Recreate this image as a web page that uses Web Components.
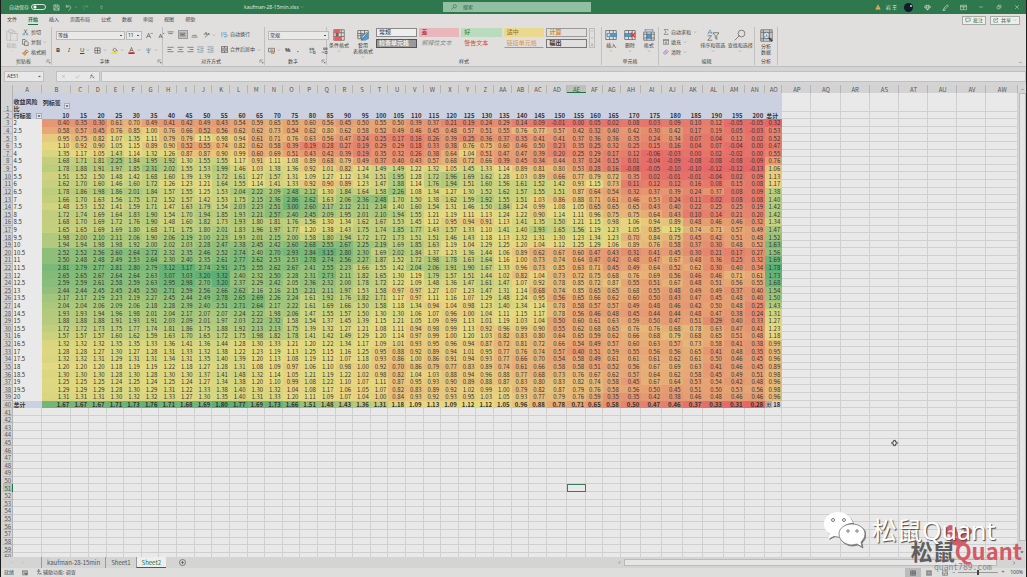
<!DOCTYPE html>
<html lang="zh-CN">
<head>
<meta charset="utf-8">
<title>kaufman-28-15min.xlsx</title>
<style>
  html, body { height: 100%; }
  body {
    margin: 0;
    overflow: hidden;
    background: #1d1f1e;
    color: #444;
    font: 5px/7px "Noto Sans", "Noto Sans CJK SC", sans-serif;
  }
</style>
</head>
<body>
<excel-app></excel-app>

<script>
const ICONS = {
  save: '<path d="M2 2h10l2 2v10H2zM5 2v4h6V2M4 14V9h8v5"/>',
  undo: '<path d="M3 2v5h5M3 7c3-5 11-3 10 2-.5 3-3 4-5 6"/>',
  redo: '<path d="M13 2v5H8M13 7C10 2 2 4 3 9c.500 3 3 4 5 6"/>',
  more: '<path d="M4 4h8M5 8l3 4 3-4"/>',
  chevron: '<path d="M4 6l4 4 4-4"/>',
  up: '<path d="M4 10l4-4 4 4"/>',
  left: '<path d="M10 4L6 8l4 4"/>',
  right: '<path d="M6 4l4 4-4 4"/>',
  search: '<circle cx="10" cy="6" r="4.500"/><path d="M7 9l-6 6"/>',
  warn: '<path d="M8 2l6 12H2z" fill="#efb464" stroke="#efb464"/><path d="M8 6v4M8 12v1" stroke="#6b4a10"/>',
  gem: '<path d="M4 3h8l3 4-7 7-7-7zM1 7h14M6 3L5 7l3 7 3-7-1-4"/>',
  pen: '<path d="M13 2L6 7l-3 6 5-2 6-6zM3 13l-1 2h6"/>',
  display: '<path d="M1 3h14v10H1zM1 6h14M8 12V8M6 9l2-2 2 2"/>',
  min: '<path d="M3 8h10"/>',
  restore: '<path d="M3 6h7v7H3zM6 6V3h7v7h-3"/>',
  close: '<path d="M3 3l10 10M13 3L3 13"/>',
  comment: '<path d="M2 3h12v8H8l-3 3v-3H2z"/>',
  share: '<path d="M7 5H2v9h10v-4M6 10c0-4 3-5 7-5M10 2l3 3-3 3"/>',
  paste: '<path d="M4 3H1v12h5M9 3h3v3M4 1h5v4H4zM6 6h9v10H6z" stroke="#b0b0b0"/>',
  cut: '<path d="M5 1l5 9M11 1L6 10"/><g stroke="#3b84b5"><circle cx="4" cy="12" r="2"/><circle cx="12" cy="12" r="2"/></g>',
  copy: '<path d="M6 12H1V1h6l3 3M6 5h5l3 3v7H6z"/>',
  brush: '<path d="M10 2l4 4-3 3-4-4z"/><path d="M7 5l4 4-4 6-6-5z" fill="#e3a24b" stroke="#bd7d2d"/>',
  borders: '<path d="M2 2h12v12H2zM2 8h12M8 2v12"/>',
  fill: '<path d="M4 7l4-5 5 5-5 4zM13 7l2 3"/><path d="M1 14h14" stroke="#eee21a" stroke-width="4"/>',
  fontcolor: '<path d="M4 11L8 1l4 10M5 8h6"/><path d="M1 14h14" stroke="#d3232a" stroke-width="4"/>',
  phonetic: '<path d="M2 5h12M8 2v3M4 8h8M8 8v7M5 12h6" stroke="#6084a0"/>',
  grow: '<path d="M1 14L6 3l5 11M3 10h6M11 4l2-2 2 2"/>',
  shrink: '<path d="M2 14L6 5l4 9M4 11h4M11 2l2 2 2-2"/>',
  atop: '<path d="M1 2h14M3 6h10"/>',
  amid: '<path d="M1 5h14M3 8h10M1 11h14"/>',
  abot: '<path d="M3 10h10M1 14h14"/>',
  aleft: '<path d="M1 3h14M1 8h9M1 13h14"/>',
  acenter: '<path d="M1 3h14M4 8h8M1 13h14"/>',
  aright: '<path d="M1 3h14M6 8h9M1 13h14"/>',
  orient: '<path d="M2 9l5-6 3 6M4 7h5M4 15L14 6M11 6h3v3"/>',
  outdent: '<path d="M1 2h14M8 6h7M8 10h7M1 14h14M6 8H1M3 6L1 8l2 2" stroke="#567a91"/>',
  indent: '<path d="M1 2h14M8 6h7M8 10h7M1 14h14M1 8h5M4 6l2 2-2 2" stroke="#567a91"/>',
  wrap: '<path d="M2 2v12M5 4h8M5 8h7c4 0 3 5 0 5H8M10 11l-2 2 2 2" stroke="#3b84b5"/>',
  merge: '<path d="M1 1h14v14H1zM1 5h14M1 11h14M8 1v4M8 11v4"/><path d="M3 8h10M5 6L3 8l2 2M11 6l2 2-2 2" stroke="#3b84b5"/>',
  money: '<path d="M1 3h14v8H1zM5 7h6"/><path d="M8 9h6v6H8z" fill="#e3a24b" stroke="#bd7d2d"/>',
  decup: '<path d="M2 3h3v4H2zM8 3h3v4H8zM10 10h4v5h-4z"/><path d="M8 12H2M4 10l-2 2 2 2" stroke="#3b84b5"/>',
  decdown: '<path d="M6 2h3v4H6zM11 2h3v4h-3zM9 10h5v5H9z"/><path d="M1 12h5M4 10l2 2-2 2" stroke="#3b84b5"/>',
  cond: '<path d="M1 1h14v14H1zM1 5h14M1 10h14M6 1v14M11 1v14"/><path d="M2 1h7v4H2zM2 10h9v5H2z" fill="#dd615f" stroke="#dd615f"/><path d="M4 6h3v3H4z" fill="#4e90bb"/>',
  tablefmt: '<path d="M1 2h14v11H1zM1 6h14M1 9h14M5 2v11M10 2v11"/><path d="M6 6h9v7l-4 2H6z" fill="#4e9bcb" stroke="#4e9bcb"/><path d="M15 4l-6 7-3 4 1-5 6-6" fill="#e5f0f5"/>',
  insert: '<path d="M1 2h14v12H1zM6 2v12M11 2v12"/><path d="M3 6h13v4H3z" fill="#4e9bcb" stroke="#327aa8"/><path d="M6 5L2 8l4 3" stroke="#327aa8" fill="#e0dfdd"/>',
  del: '<path d="M1 2h14v12H1zM6 2v12M11 2v12"/><path d="M1 6h9v4H1z" fill="#4e9bcb" stroke="#327aa8"/><path d="M9 5l6 6M15 5l-6 6" stroke="#d93837" stroke-width="2"/>',
  format: '<path d="M1 4h14v11H1zM1 7h14M1 12h14M5 4v11M11 4v11"/><path d="M5 7h6v5H5z" fill="#4e9bcb" stroke="#327aa8"/><path d="M3 1h10M3 0v3M13 0v3" stroke="#327aa8"/>',
  sum: '<path d="M13 4V1H3l5 7-5 7h10v-3"/>',
  filldown: '<path d="M1 1h14v13H1zM1 4h14"/><path d="M8 6v6M5 9l3 3 3-3" stroke="#3b84b5" stroke-width="2"/>',
  clear: '<path d="M2 9l7-7 5 5-7 7H4l-3-3z" fill="#ddbde4" stroke="#9b54a6"/><path d="M5 6l5 5" stroke="#9b54a6"/>',
  sort: '<path d="M1 7l3-6 3 6M2 5h4" stroke="#3b84b5"/><path d="M1 9h5l-5 6h6M8 5h8l-3 4v5l-2-2V9z"/>',
  analyze: '<path d="M1 1h14v14H1zM1 4h14M1 12h14M4 1v14M12 1v14"/><circle cx="8" cy="8" r="4" fill="#e0e9ed"/><path d="M6 10V8M8 10V6M10 10V7" stroke="#3b84b5"/><path d="M11 11l4 4" stroke-width="2"/>',
  launcher: '<path d="M3 12V3h9M7 7l6 6M13 9v4H9"/>',
  fx: '<path d="M2 14c4 1 3-11 7-12M4 7h6M9 9l5 5M14 9l-5 5"/>',
  check: '<path d="M2 8l4 5 8-10"/>',
  plus: '<circle cx="8" cy="8" r="7"/><path d="M8 4v8M4 8h8"/>',
  drop: '<path d="M5 7h6l-3 3z" fill="currentColor"/>',
  macro: '<path d="M1 2h14v11H1zM1 5h14M4 8h4M4 10h4"/><circle cx="11" cy="10" r="2" fill="currentColor"/>',
  access: '<circle cx="7" cy="3" r="2"/><path d="M2 6h10M7 6v4l-3 5M7 10l2 4M10 10l5 5M15 10l-5 5"/>',
  normal: '<path d="M1 2h14v12H1zM1 6h14M1 10h14M6 2v12M11 2v12"/>',
  page: '<path d="M1 2h14v12H1zM4 4h8v8H4zM6 7h4M6 9h4"/>',
  breaks: '<path d="M1 2h14v12H1zM1 8h5v6M10 2v7h5"/>',
  tag: '<path d="M2 2h12v12H2z" fill="#eef1f5"/><path d="M5 5h7v7H5zM5 8h7M8 5v7"/>'
};

class UiIcon extends HTMLElement {
  connectedCallback() {
    const size = this.getAttribute("size") || 7;
    this.attachShadow({ mode: "open" }).innerHTML = `
      <style>
        :host { display: inline-flex; flex: none; }
        svg { display: block; fill: none; stroke: currentColor; stroke-width: ${size > 10 ? 0.8 : 1.3}; }
      </style>
      <svg width="${size}" height="${size}" viewBox="0 0 16 16" aria-hidden="true">${ICONS[this.getAttribute("name")]}</svg>
    `;
  }
}
customElements.define("ui-icon", UiIcon);

// icon, optional text and optional arrow; "tall" stacks them
class ToolButton extends HTMLElement {
  connectedCallback() {
    const icon = this.getAttribute("icon");
    const size = this.getAttribute("size") || 7;
    this.attachShadow({ mode: "open" }).innerHTML = `
      <style>
        :host { display: inline-flex; flex: none; }
        button {
          display: flex; align-items: center; gap: 2px;
          min-width: 8px; padding: 0; border: 0;
          background: none; color: inherit; font: inherit; white-space: nowrap;
        }
        :host([tall]) button { flex-direction: column; gap: 1px; line-height: 6px; }
        :host([on]) button { background: #c2c2c0; outline: 1px solid #9b9b9b; }
        :host([faded]) button { color: #aaa; }
        :host([wide]) button { justify-content: center; width: 18px; height: 13px; }
      </style>
      <button type="button" aria-label="${this.getAttribute("label") || icon || ""}">
        ${icon ? `<ui-icon name="${icon}" size="${size}"></ui-icon>` : ""}
        <slot></slot>
        ${this.hasAttribute("menu") ? '<ui-icon name="chevron" size="4"></ui-icon>' : ""}
      </button>
    `;
  }
}
customElements.define("tool-button", ToolButton);

class TitleBar extends HTMLElement {
  connectedCallback() {
    this.attachShadow({ mode: "open" }).innerHTML = `
      <style>
        :host {
          display: grid; grid-template-columns: 243fr 199fr 148fr 435fr;
          align-items: center; height: 14px; background: #2f774d; color: #d9e7de;
        }
        .left, .right { display: flex; align-items: center; }
        .left { gap: 4px; padding-left: 8px; }
        label { display: flex; align-items: center; gap: 2px; }
        input[type=checkbox] {
          appearance: none; width: 15px; height: 6px; margin: 0 3px 0 0;
          border: 1px solid #d9e7de; border-radius: 4px;
          background: radial-gradient(circle at 3px 2px, #fff 1px, transparent 2px);
        }
        .search {
          display: flex; align-items: center; gap: 6px; height: 10px; padding-left: 8px;
          background: #91bfa2; color: #285b3c;
        }
        input[type=search] {
          flex: 1; min-width: 0; padding: 0; border: 0; background: none; color: inherit; font: inherit;
        }
        .right { justify-content: flex-end; }
        .user { margin: 0 5px; white-space: pre; }
        .avatar { width: 9px; height: 9px; margin: 0 5px 0 2px; border-radius: 50%; background: radial-gradient(circle at 7px 3px, #98a6b5 0 1px, #101c2a 1px); }
      </style>
      <div class="left">
        <label>自动保存 <input type="checkbox"></label>
        <tool-button icon="save"></tool-button>
        <tool-button icon="undo" menu></tool-button>
        <tool-button icon="redo" menu style="opacity: .35"></tool-button>
        <tool-button icon="more" size="5"></tool-button>
      </div>
      <div>kaufman-28-15min.xlsx <ui-icon name="chevron" size="4"></ui-icon></div>
      <div class="search"><ui-icon name="search" size="6"></ui-icon><input type="search" value="搜索" aria-label="搜索"></div>
      <div class="right">
        <ui-icon name="warn" size="6"></ui-icon>
        <span class="user">岩 王</span>
        <span class="avatar"></span>
        <tool-button wide icon="gem"></tool-button>
        <tool-button wide icon="pen"></tool-button>
        <tool-button wide icon="display"></tool-button>
        <tool-button wide icon="min" size="6"></tool-button>
        <tool-button wide icon="restore" size="6"></tool-button>
        <tool-button wide icon="close" size="6"></tool-button>
      </div>
    `;
  }
}
customElements.define("title-bar", TitleBar);

class RibbonTabs extends HTMLElement {
  connectedCallback() {
    const tabs = ["文件", "开始", "插入", "页面布局", "公式", "数据", "审阅", "视图", "帮助"];
    this.attachShadow({ mode: "open" }).innerHTML = `
      <style>
        :host { display: flex; align-items: center; height: 12px; padding: 0 6px; background: #e0dfdd; }
        nav { display: flex; flex: 1; gap: 11px; }
        a { color: #444; text-decoration: none; line-height: 9px; border-bottom: 1px solid transparent; }
        a.on { color: #1f6e43; font-weight: bold; border-color: #1f6e43; }
        .act { display: flex; gap: 4px; }
        .act tool-button { padding: 0 2px; border: 1px solid #a9a9a9; background: #eeeeed; color: #1f6e43; line-height: 7px; }
      </style>
      <nav>${tabs.map((t, i) => `<a href="#"${i === 1 ? ' class="on"' : ""}>${t}</a>`).join("")}</nav>
      <div class="act">
        <tool-button icon="comment" size="6">批注</tool-button>
        <tool-button icon="share" size="6" menu>共享</tool-button>
      </div>
    `;
  }
}
customElements.define("ribbon-tabs", RibbonTabs);

class RibbonGroup extends HTMLElement {
  connectedCallback() {
    this.attachShadow({ mode: "open" }).innerHTML = `
      <style>
        :host { display: flex; flex-direction: column; box-sizing: border-box; flex: none; border-right: 1px solid #c0c0be; }
        .body { flex: 1; display: flex; min-height: 0; }
        footer { display: flex; justify-content: center; align-items: center; height: 8px; }
        footer span { flex: 1; text-align: center; }
      </style>
      <div class="body"><slot></slot></div>
      <footer><span>${this.getAttribute("label")}</span>${this.hasAttribute("launcher") ? '<ui-icon name="launcher" size="5"></ui-icon>' : ""}</footer>
    `;
  }
}
customElements.define("ribbon-group", RibbonGroup);

class StyleChip extends HTMLElement {
  connectedCallback() {
    this.attachShadow({ mode: "open" }).innerHTML = `
      <style>
        :host { display: block; }
        button {
          box-sizing: border-box; width: 100%; height: 9px; padding: 0 2px;
          border: 1px solid var(--edge, transparent); border-bottom-color: var(--line, var(--edge, transparent));
          background: var(--fill, transparent); color: var(--ink, #333);
          font: inherit; font-size: 6px; line-height: 7px; text-align: left;
        }
      </style>
      <button type="button"><slot></slot></button>
    `;
  }
}
customElements.define("style-chip", StyleChip);

class RibbonBar extends HTMLElement {
  connectedCallback() {
    this.attachShadow({ mode: "open" }).innerHTML = `
      <style>
        :host { display: flex; height: 38px; padding: 1px 0; background: #e0dfdd; border-bottom: 1px solid #bebebe; }
        .rows { display: flex; flex: 1; flex-direction: column; justify-content: space-around; }
        .row { display: flex; align-items: center; gap: 4px; }
        .big { display: flex; flex: 1; justify-content: space-around; align-items: flex-start; padding-top: 2px; text-align: center; }
        .two { padding: 0 4px; }
        select {
          appearance: none; box-sizing: border-box; height: 9px; padding: 0 1px; border: 1px solid #b9b9b9; border-radius: 0;
          background: #e9e9e8 linear-gradient(#555, #555) no-repeat right 2px center / 2px 1px;
          color: #333; font: inherit;
        }
        .gallery {
          display: grid; grid-template-columns: repeat(5, 1fr) 6px; gap: 2px;
          width: 219px; margin: 1px 6px auto 1px;
        }
        .scroll { grid-area: 1 / 6 / 3 / 7; display: flex; flex-direction: column; justify-content: space-between; align-items: center; border: 1px solid #bbb; }
        .end { display: flex; flex: 1; align-items: flex-end; justify-content: flex-end; padding: 0 3px; }
        b, i, u { font-size: 6px; }
      </style>
      <ribbon-group label="剪贴板" launcher style="width: 51px">
        <div class="big" style="flex: none; width: 21px"><tool-button tall faded menu icon="paste" size="12">粘贴</tool-button></div>
        <div class="rows">
          <tool-button icon="cut">剪切</tool-button>
          <tool-button icon="copy" menu>复制</tool-button>
          <tool-button icon="brush">格式刷</tool-button>
        </div>
      </ribbon-group>
      <ribbon-group label="字体" launcher style="width: 111px">
        <div class="rows two">
          <div class="row">
            <select aria-label="字体" style="width: 69px; margin-right: -3px"><option>等线</option></select>
            <select aria-label="字号" style="width: 16px"><option>11</option></select>
            <tool-button icon="grow"></tool-button><tool-button icon="shrink"></tool-button>
          </div>
          <div class="row">
            <tool-button label="加粗"><b>B</b></tool-button>
            <tool-button label="倾斜"><i>I</i></tool-button>
            <tool-button label="下划线" menu><u>U</u></tool-button>
            <tool-button icon="borders" menu></tool-button>
            <tool-button icon="fill" menu></tool-button>
            <tool-button icon="fontcolor" menu></tool-button>
            <tool-button icon="phonetic" menu></tool-button>
          </div>
        </div>
      </ribbon-group>
      <ribbon-group label="对齐方式" launcher style="width: 102px">
        <div class="rows two" style="flex: none; width: 50px">
          <div class="row">
            <tool-button icon="atop"></tool-button><tool-button icon="amid" on></tool-button><tool-button icon="abot"></tool-button>
            <tool-button icon="orient" menu></tool-button>
          </div>
          <div class="row" style="gap: 2px">
            <tool-button icon="aleft"></tool-button><tool-button icon="acenter"></tool-button><tool-button icon="aright"></tool-button>
            <tool-button icon="outdent"></tool-button><tool-button icon="indent"></tool-button>
          </div>
        </div>
        <div class="rows">
          <tool-button icon="wrap">自动换行</tool-button>
          <tool-button icon="merge" menu>合并后居中</tool-button>
        </div>
      </ribbon-group>
      <ribbon-group label="数字" launcher style="width: 62px">
        <div class="rows" style="padding: 0 3px">
          <select aria-label="数字格式"><option>常规</option></select>
          <div class="row">
            <tool-button icon="money" menu></tool-button>
            <tool-button label="百分比"><b>%</b></tool-button>
            <tool-button label="千位分隔"><b>,</b></tool-button>
            <tool-button icon="decup"></tool-button><tool-button icon="decdown"></tool-button>
          </div>
        </div>
      </ribbon-group>
      <ribbon-group label="样式" style="width: 275px">
        <div class="big">
          <tool-button tall menu icon="cond" size="12">条件格式</tool-button>
          <tool-button tall menu icon="tablefmt" size="12">套用<br>表格格式</tool-button>
        </div>
        <div class="gallery">
          <style-chip style="--edge: #8a8a8a; --fill: #eee">常规</style-chip>
          <style-chip style="--fill: #e9b7bb; --ink: #a52634">差</style-chip>
          <style-chip style="--fill: #b8dcbc; --ink: #237a35">好</style-chip>
          <style-chip style="--fill: #ebd98f; --ink: #97701b">适中</style-chip>
          <style-chip style="--edge: #9b9b9b; --ink: #db8228; font-weight: bold">计算</style-chip>
          <style-chip style="--edge: #555; --fill: #999; --ink: #eee; font-weight: bold">检查单元格</style-chip>
          <style-chip style="--ink: #888; font-style: italic">解释性文本</style-chip>
          <style-chip style="--ink: #dc4442">警告文本</style-chip>
          <style-chip style="--line: #d98a3a; --ink: #dd943f">链接单元格</style-chip>
          <style-chip style="--edge: #777; font-weight: bold">输出</style-chip>
          <div class="scroll"><ui-icon name="up" size="4"></ui-icon><ui-icon name="chevron" size="4"></ui-icon><ui-icon name="more" size="4"></ui-icon></div>
        </div>
      </ribbon-group>
      <ribbon-group label="单元格" style="width: 57px">
        <div class="big">
          <tool-button tall menu icon="insert" size="12">插入</tool-button>
          <tool-button tall menu icon="del" size="12">删除</tool-button>
          <tool-button tall menu icon="format" size="12">格式</tool-button>
        </div>
      </ribbon-group>
      <ribbon-group label="编辑" style="width: 96px">
        <div class="rows" style="padding-left: 4px">
          <tool-button icon="sum" size="6" menu>自动求和</tool-button>
          <tool-button icon="filldown" size="6" menu>填充</tool-button>
          <tool-button icon="clear" size="6" menu>清除</tool-button>
        </div>
        <div class="big" style="flex: none; width: 55px">
          <tool-button tall menu icon="sort" size="12">排序和筛选</tool-button>
          <tool-button tall menu icon="search" size="12">查找和选择</tool-button>
        </div>
      </ribbon-group>
      <ribbon-group label="分析" style="width: 23px">
        <div class="big"><tool-button tall icon="analyze" size="13">分析<br>数据</tool-button></div>
      </ribbon-group>
      <div class="end"><ui-icon name="up" size="5"></ui-icon></div>
    `;
  }
}
customElements.define("ribbon-bar", RibbonBar);

class FormulaBar extends HTMLElement {
  connectedCallback() {
    this.attachShadow({ mode: "open" }).innerHTML = `
      <style>
        :host { display: flex; align-items: center; gap: 12px; height: 18px; padding-left: 3px; background: #d4d4d4; }
        input, .tools, .name { box-sizing: border-box; height: 11px; border: 1px solid #c0c0c0; background: #e8e8e8; color: #444; font: inherit; }
        .name { display: flex; align-items: center; width: 40px; padding-right: 1px; }
        .name input { flex: 1; min-width: 0; border: 0; padding: 0 2px; height: 9px; }
        .wrap { display: flex; flex: 1; gap: 1px; }
        .tools { display: flex; align-items: center; justify-content: space-around; width: 44px; }
        .formula { flex: 1; }
      </style>
      <div class="name"><input value="AE51" aria-label="名称框"><ui-icon name="drop" size="5"></ui-icon></div>
      <div class="wrap">
        <div class="tools"><ui-icon name="close" size="5" style="color: #999"></ui-icon><ui-icon name="check" size="5" style="color: #999"></ui-icon><ui-icon name="fx" size="6"></ui-icon></div>
        <input class="formula" aria-label="编辑栏">
      </div>
    `;
  }
}
customElements.define("formula-bar", FormulaBar);

// one line per sheet row, 3 to 40: label, 10 to 200, row total
const DATA = `
2 0.40 0.35 0.30 0.61 0.70 0.49 0.41 0.42 0.49 0.43 0.54 0.59 0.65 0.55 0.60 0.56 0.45 0.50 0.55 0.50 0.39 0.37 0.21 0.19 0.24 0.29 0.14 0.09 -0.01 0.00 0.05 0.02 0.08 0.03 0.09 0.10 0.12 -0.05 -0.05 0.32
2.5 0.58 0.57 0.45 0.76 0.85 1.00 0.76 0.66 0.52 0.56 0.62 0.62 0.73 0.54 0.62 0.80 0.62 0.58 0.52 0.49 0.46 0.45 0.48 0.57 0.51 0.55 0.76 0.77 0.57 0.42 0.32 0.40 0.42 0.30 0.42 0.17 0.19 0.05 -0.03 0.53
3 0.95 0.75 0.82 1.07 1.35 1.11 0.79 0.79 1.15 0.98 0.94 0.61 0.71 0.76 0.63 0.56 0.47 0.24 0.25 0.17 0.16 0.26 0.39 0.25 0.36 0.37 0.35 0.41 0.41 0.37 0.36 0.36 0.35 0.24 0.34 0.07 0.04 0.12 0.02 0.52
3.5 1.10 0.92 0.90 1.05 1.15 0.89 0.90 0.52 0.55 0.74 0.82 0.62 0.58 0.39 0.19 0.28 0.27 0.19 0.29 0.29 0.18 0.33 0.38 0.76 0.75 0.60 0.46 0.50 0.23 0.35 0.25 0.32 0.25 0.15 0.16 0.04 0.07 -0.04 0.00 0.47
4 1.35 1.17 1.05 1.43 1.14 1.32 1.26 0.87 0.87 0.90 0.99 0.60 0.69 0.51 0.43 0.42 0.39 0.19 0.35 0.32 0.26 0.38 0.64 1.04 0.51 0.47 0.47 0.39 0.20 0.25 0.29 0.17 0.12 -0.06 -0.03 0.00 0.02 -0.02 0.00 0.55
4.5 1.68 1.71 1.81 2.25 1.84 1.95 1.92 1.30 1.55 1.55 1.17 0.91 1.11 1.08 0.89 0.68 0.79 0.49 0.37 0.40 0.43 0.57 0.68 0.72 0.66 0.39 0.45 0.34 0.44 0.37 0.24 0.15 0.01 -0.04 -0.09 -0.08 -0.08 -0.08 -0.09 0.76
5 1.78 1.88 1.91 1.97 1.85 2.31 2.02 1.55 1.53 1.99 1.46 1.03 1.38 1.36 0.92 1.01 0.82 1.24 1.49 1.49 1.22 1.32 1.05 1.45 1.33 1.14 0.89 0.81 0.80 0.53 0.28 0.16 -0.08 -0.05 -0.10 -0.10 -0.12 -0.12 -0.13 1.06
5.5 1.51 1.52 1.50 1.48 1.42 1.68 1.60 1.39 1.39 1.72 1.61 1.27 1.57 1.31 1.09 1.27 1.12 1.34 1.51 1.95 1.28 1.72 1.96 1.69 1.62 1.28 1.03 0.89 0.66 0.77 0.79 0.72 0.35 0.02 -0.01 -0.01 -0.04 0.02 0.09 1.13
6 1.62 1.70 1.60 1.46 1.60 1.72 1.26 1.23 1.21 1.64 1.55 1.14 1.41 1.33 0.92 0.90 0.89 1.23 1.47 1.88 1.14 1.76 1.94 1.51 1.60 1.56 1.61 1.52 1.42 0.93 1.15 0.73 0.11 0.12 0.12 0.16 0.08 0.15 0.08 1.17
6.5 1.78 1.86 1.98 1.86 2.01 1.84 1.57 1.55 1.25 1.53 2.04 2.22 2.09 2.48 2.12 1.30 1.84 1.64 1.58 2.26 1.08 1.34 1.27 1.30 1.52 1.62 1.57 1.55 1.51 0.87 0.64 0.54 0.32 0.37 0.39 0.24 0.37 0.08 0.09 1.38
7 1.66 1.70 1.63 1.56 1.75 1.72 1.52 1.57 1.42 1.53 1.75 2.15 2.36 2.86 2.62 1.63 2.06 2.36 2.48 1.70 1.50 1.38 1.62 1.59 1.92 1.55 1.51 1.03 0.86 0.88 0.71 0.61 0.46 0.53 0.24 0.11 0.02 0.08 0.08 1.40
7.5 1.48 1.53 1.52 1.41 1.59 1.71 1.47 1.63 1.79 1.54 2.03 2.23 2.51 3.00 2.60 2.17 2.12 2.11 2.14 1.40 1.60 1.54 1.31 1.46 1.50 1.84 1.24 0.99 1.08 1.05 0.65 0.65 0.65 0.43 0.40 0.22 0.25 0.25 0.19 1.42
8 1.72 1.74 1.69 1.64 1.83 1.90 1.54 1.70 1.94 1.85 1.93 2.21 2.57 2.40 2.45 2.09 1.95 2.01 2.10 1.94 1.55 1.21 1.19 1.11 1.13 1.24 1.22 0.90 1.14 1.11 0.96 0.75 0.75 0.64 0.43 0.10 0.14 0.21 0.20 1.42
8.5 1.68 1.70 1.69 1.72 1.76 1.90 1.48 1.60 1.82 1.73 1.93 1.80 1.81 1.76 1.56 1.30 1.34 1.62 1.67 1.53 1.45 1.12 0.95 0.94 0.91 1.13 1.41 1.35 1.50 1.21 1.15 0.98 1.06 0.94 0.89 0.48 0.46 0.46 0.32 1.34
9 1.65 1.65 1.69 1.69 1.80 1.68 1.71 1.75 1.80 2.01 1.83 1.96 1.97 1.77 1.20 1.38 1.43 1.75 1.74 1.85 1.77 1.43 1.57 1.33 1.10 1.41 1.40 1.93 1.65 1.56 1.19 1.23 1.05 0.85 1.19 0.74 0.71 0.57 0.49 1.47
9.5 1.98 2.00 2.10 2.11 2.06 1.90 2.06 2.19 2.00 2.23 1.93 2.01 2.15 2.00 1.58 1.80 1.94 1.72 1.72 1.73 1.51 1.51 1.46 1.43 1.18 1.13 1.32 1.31 1.30 1.23 1.34 1.23 0.70 0.84 0.75 0.45 0.42 0.51 0.48 1.52
10 1.94 1.94 1.98 1.98 1.92 2.00 2.02 2.03 2.28 2.47 2.38 2.45 2.42 2.60 2.68 2.55 2.67 2.25 2.19 1.69 1.85 1.63 1.19 1.04 1.29 1.25 1.20 1.04 1.12 1.25 1.29 1.06 0.89 0.76 0.58 0.37 0.30 0.48 0.52 1.63
10.5 2.52 2.52 2.56 2.60 2.64 2.72 2.32 2.35 2.46 2.52 2.74 2.40 2.70 2.93 2.84 3.15 2.80 2.30 1.69 2.02 1.84 1.37 1.23 1.36 1.44 1.06 0.89 0.62 0.67 0.60 0.47 0.43 0.31 0.41 0.45 0.30 0.21 0.17 0.27 1.56
11 2.50 2.48 2.48 2.49 2.53 2.64 2.30 2.40 2.35 2.61 2.77 2.62 2.53 2.53 2.78 2.74 2.56 2.27 1.87 1.52 1.72 1.98 1.78 1.63 1.64 1.16 1.00 0.73 0.74 0.64 0.47 0.42 0.48 0.47 0.67 0.48 0.36 0.25 0.32 1.69
11.5 2.81 2.79 2.77 2.81 2.80 2.79 3.12 3.17 2.74 2.91 2.75 2.55 2.62 2.67 2.41 2.55 2.23 1.66 1.55 1.42 2.04 2.06 1.91 1.90 1.67 1.33 0.96 0.73 0.85 0.63 0.71 0.45 0.49 0.64 0.52 0.62 0.30 0.40 0.34 1.78
12 2.65 2.65 2.67 2.64 2.64 2.63 3.07 3.03 3.20 3.32 2.40 2.32 2.50 2.28 2.31 2.73 2.11 1.82 1.65 1.30 1.19 1.79 1.57 1.51 1.44 1.02 0.82 1.04 0.73 0.72 0.75 0.68 0.76 0.69 0.56 0.46 0.46 0.71 0.61 1.73
12.5 2.59 2.59 2.61 2.58 2.59 2.63 2.95 2.98 2.70 3.20 2.37 2.29 2.42 2.05 2.36 2.32 2.00 1.78 1.72 1.22 1.09 1.48 1.36 1.47 1.61 1.47 1.07 0.92 0.78 0.85 0.72 0.87 0.55 0.51 0.67 0.48 0.51 0.56 0.55 1.68
13 2.44 2.44 2.45 2.45 2.45 2.50 2.71 2.59 2.56 2.66 2.62 2.16 2.16 2.15 2.21 2.11 1.97 1.53 1.58 0.97 0.97 1.27 1.07 1.23 1.47 1.31 1.14 0.68 0.74 0.85 0.65 0.65 0.68 0.55 0.48 0.49 0.49 0.37 0.40 1.54
13.5 2.17 2.17 2.19 2.23 2.19 2.27 2.45 2.44 2.49 2.78 2.65 2.69 2.26 2.24 1.61 1.92 1.76 1.82 1.71 1.17 0.97 1.11 1.16 1.07 1.29 1.48 1.24 0.95 0.56 0.65 0.66 0.62 0.60 0.50 0.43 0.47 0.45 0.48 0.40 1.50
14 2.04 2.04 2.06 2.09 2.06 2.18 2.28 2.39 2.40 2.51 2.71 2.64 2.17 2.22 1.61 1.69 1.66 1.50 1.58 1.18 1.34 0.94 1.04 0.98 1.23 1.40 1.34 1.14 0.78 0.58 0.57 0.57 0.49 0.48 0.46 0.42 0.50 0.48 0.25 1.43
14.5 1.93 1.93 1.94 1.96 1.98 2.01 2.04 2.17 2.07 2.07 2.24 2.22 1.98 2.06 1.47 1.55 1.57 1.50 1.30 1.30 1.06 1.07 0.96 1.00 1.04 1.11 1.15 1.17 0.78 0.56 0.46 0.48 0.45 0.44 0.44 0.48 0.47 0.38 0.24 1.31
15 1.88 1.88 1.88 1.91 1.93 1.91 2.03 2.09 2.01 1.97 2.03 2.22 2.32 1.58 1.54 1.37 1.45 1.39 1.15 1.21 1.05 1.09 0.99 1.13 1.01 1.19 1.03 1.04 0.50 0.60 0.61 0.63 0.59 0.50 0.47 0.51 0.29 0.40 0.33 1.27
15.5 1.72 1.72 1.73 1.75 1.77 1.74 1.81 1.86 1.75 1.88 1.92 2.13 2.13 1.75 1.39 1.32 1.27 1.21 1.08 1.11 0.94 0.98 0.99 1.13 0.92 0.96 0.99 0.90 0.55 0.62 0.68 0.65 0.76 0.76 0.68 0.78 0.63 0.47 0.41 1.23
16 1.57 1.57 1.57 1.60 1.62 1.59 1.63 1.70 1.65 1.72 1.75 1.98 1.82 1.78 1.41 1.42 1.49 1.29 1.20 1.14 0.97 0.99 1.00 1.20 1.03 0.82 0.83 0.80 0.64 0.65 0.59 0.62 0.66 0.68 0.79 0.68 0.65 0.51 0.48 1.18
16.5 1.32 1.32 1.32 1.35 1.35 1.33 1.36 1.41 1.36 1.44 1.28 1.30 1.33 1.21 1.20 1.22 1.34 1.17 1.09 1.01 0.93 0.95 0.96 0.94 0.87 0.72 0.81 0.72 0.66 0.54 0.49 0.57 0.60 0.63 0.57 0.73 0.58 0.41 0.38 0.99
17 1.28 1.28 1.27 1.30 1.27 1.28 1.31 1.33 1.32 1.38 1.22 1.23 1.19 1.13 1.25 1.15 1.16 1.25 0.95 0.88 0.92 0.89 0.94 1.01 0.95 0.77 0.76 0.74 0.57 0.40 0.51 0.59 0.55 0.56 0.56 0.65 0.41 0.48 0.35 0.95
17.5 1.32 1.32 1.31 1.29 1.31 1.31 1.34 1.31 1.35 1.40 1.39 1.20 1.13 1.08 1.19 1.12 1.07 1.18 0.93 0.86 1.00 0.86 0.91 0.94 0.93 0.77 0.66 0.70 0.54 0.58 0.49 0.61 0.61 0.61 0.62 0.61 0.50 0.46 0.45 0.96
18 1.20 1.20 1.20 1.18 1.19 1.19 1.22 1.18 1.27 1.28 1.31 1.08 1.09 0.97 1.06 1.10 0.98 1.00 0.92 0.70 0.86 0.79 0.77 0.83 0.89 0.74 0.61 0.66 0.58 0.58 0.51 0.52 0.56 0.67 0.69 0.63 0.41 0.46 0.45 0.89
18.5 1.30 1.30 1.30 1.28 1.30 1.28 1.30 1.30 1.37 1.41 1.48 1.32 1.14 1.05 1.21 1.19 1.22 1.02 0.98 0.82 1.04 1.03 0.88 0.94 0.96 0.88 0.77 0.68 0.73 0.76 0.67 0.62 0.57 0.64 0.62 0.58 0.45 0.49 0.51 0.98
19 1.25 1.25 1.25 1.24 1.25 1.24 1.25 1.24 1.27 1.34 1.38 1.20 1.10 0.99 1.08 1.22 1.10 1.07 1.11 0.87 0.95 0.93 0.90 0.89 0.88 0.87 0.83 0.80 0.83 0.82 0.74 0.58 0.45 0.67 0.64 0.53 0.54 0.42 0.48 0.96
19.5 1.29 1.29 1.29 1.28 1.30 1.29 1.31 1.22 1.33 1.38 1.40 1.30 1.32 1.04 1.08 1.17 1.06 1.05 1.07 0.82 0.83 0.89 0.92 1.02 0.99 1.00 0.79 0.82 0.87 0.79 0.76 0.58 0.56 0.50 0.45 0.51 0.50 0.53 0.56 0.98
20 1.31 1.31 1.31 1.30 1.32 1.32 1.33 1.27 1.30 1.35 1.40 1.31 1.33 1.20 1.11 1.09 1.07 1.04 1.00 0.84 0.93 0.92 0.93 0.95 1.03 1.05 0.93 0.77 0.79 0.76 0.59 0.35 0.35 0.42 0.38 0.46 0.48 0.46 0.46 0.96
总计 1.67 1.67 1.67 1.71 1.73 1.76 1.71 1.68 1.69 1.80 1.77 1.69 1.73 1.66 1.51 1.48 1.43 1.36 1.31 1.18 1.09 1.13 1.09 1.12 1.12 1.05 0.96 0.88 0.78 0.71 0.65 0.58 0.50 0.47 0.46 0.37 0.33 0.31 0.28 1.18
`.trim().split("\n").map(line => line.split(" "));

const RED = [229, 103, 104];
const YELLOW = [230, 218, 129];
const GREEN = [90, 174, 118];

function scaleColor(v, min, mid, max) {
  const [a, b, t] = v < mid ? [RED, YELLOW, (v - min) / (mid - min)] : [YELLOW, GREEN, (v - mid) / (max - mid)];
  return `rgb(${a.map((c, i) => Math.round(c + (b[i] - c) * t)).join(",")})`;
}

function colName(i) {
  return i < 26 ? String.fromCharCode(65 + i) : "A" + String.fromCharCode(39 + i);
}

class SheetGrid extends HTMLElement {
  connectedCallback() {
    // relative widths: row numbers, A, B, C..AC, AD..AO, AP..AW
    const widths = [19, 58, 59, ...Array(27).fill(35), 40, 38, 33, 36, 41, 41, 41, 41, 41, 41, 41, 34, ...Array(7).fill(58), 62];
    const total = widths.reduce((a, b) => a + b);
    const cols = widths.map(w => `<col style="width: ${w / total * 100}%">`).join("");

    let head = "<th></th>";
    for (let c = 0; c < 49; c++) {
      head += `<th${c === 30 ? ' class="on"' : ""}>${colName(c)}</th>`;
    }

    let rows = "";
    for (let r = 1; r <= 60; r++) {
      rows += `<tr${r === 1 ? ' class="first"' : r === 40 ? ' class="sum"' : ""}><th${r === 51 ? ' class="on"' : ""}>${r}</th>`;
      for (let c = 0; c < 49; c++) rows += this.cell(r, c);
      rows += "</tr>";
    }

    this.attachShadow({ mode: "open" }).innerHTML = `
      <style>
        :host { display: flex; flex: 1; min-height: 0; padding-left: 2px; overflow: hidden; background: #d3d3d3; }
        .view { flex: 1; margin-bottom: -4px; background: #e9e9e9; }
        table { width: 100%; height: 100%; table-layout: fixed; border-spacing: 0; color: #34342f; font: 6px/7px "Noto Sans CJK SC", sans-serif; }
        tr { height: 7px; }
        thead tr { height: 8px; }
        .first { height: 17px; }
        td, th { padding: 0; white-space: nowrap; overflow: hidden; }
        td { text-align: right; padding-right: 2px; box-shadow: inset -1px -1px #d0d0d0; }
        td.heat { box-shadow: none; }
        th { background: #d3d3d3; color: #555; font-weight: normal; text-align: center; box-shadow: inset -1px 0 #b4b4b4; }
        tbody th { box-shadow: inset -1px -1px #b4b4b4; }
        .first th { vertical-align: bottom; }
        th.on { background: #bebfbe; color: #217346; box-shadow: inset 0 -1px #217346; }
        tbody th.on { box-shadow: inset -1px 0 #217346; }
        td.label { text-align: left; padding: 0 0 0 1px; box-shadow: none; }
        td.blue { background: #cbd1e0; font-weight: bold; box-shadow: none; vertical-align: bottom; }
        .first td.label { white-space: normal; }
        .first td.head { vertical-align: middle; overflow: visible; }
        .sum td { font-weight: bold; }
        td.sel { box-shadow: inset 0 0 0 1px #3c7c58; }
        .flex { display: flex; align-items: center; justify-content: space-between; height: 7px; }
        .flex ui-icon { background: #e6e8ee; outline: 1px solid #a9adb8; outline-offset: -1px; }
        .first .head ui-icon { margin: 8px 1px 0 0; }
        .bar { box-sizing: border-box; display: flex; flex-direction: column; align-items: center; width: 8px; padding: 2px 0; background: #d6d6d6; }
        .thumb { flex: 1; width: 5px; margin: 1px 0 8px; border: 1px solid #bbb; background: #e6e6e6; }
      </style>
      <div class="view">
        <table><colgroup>${cols}</colgroup><thead><tr>${head}</tr></thead><tbody>${rows}</tbody></table>
      </div>
      <div class="bar"><ui-icon name="up" size="5"></ui-icon><div class="thumb"></div><ui-icon name="drop" size="6"></ui-icon></div>
    `;
  }

  cell(r, c) {
    if (r === 51 && c === 30) return '<td class="sel"></td>';
    if (r > 40 || c > 40) return "<td></td>";
    if (r === 1) {
      if (c === 0) return '<td class="blue label">收益风险比</td>';
      if (c === 1) return '<td class="blue label head"><div class="flex">列标签<ui-icon name="drop" size="6"></ui-icon></div></td>';
      return '<td class="blue"></td>';
    }
    if (r === 2) {
      if (c === 0) return '<td class="blue label"><div class="flex">行标签<ui-icon name="drop" size="6"></ui-icon></div></td>';
      if (c === 40) return '<td class="blue label">总计</td>';
      return `<td class="blue">${5 + c * 5}</td>`;
    }
    const text = DATA[r - 3][c];
    if (c === 0) return `<td class="label${r === 40 ? " blue" : ""}">${text}</td>`;
    if (r === 40 && c === 40) return `<td class="blue"><div class="flex"><ui-icon name="tag" size="7"></ui-icon>${text.slice(2)}</div></td>`;
    const v = Number(text);
    const color = r === 40 ? scaleColor(v, 0.28, 1.12, 1.8)
      : c === 40 ? scaleColor(v, 0.32, 1.23, 1.78)
      : scaleColor(v, -0.13, 1.13, 3.32);
    return `<td class="heat" style="background: ${color}">${text}</td>`;
  }
}
customElements.define("sheet-grid", SheetGrid);

class SheetTabs extends HTMLElement {
  connectedCallback() {
    this.attachShadow({ mode: "open" }).innerHTML = `
      <style>
        :host { display: flex; align-items: stretch; height: 11px; background: #d4d4d4; font: 6px/9px "Noto Sans CJK SC", sans-serif; }
        .nav { display: flex; align-items: center; gap: 7px; width: 32px; padding-left: 8px; color: #aaa; }
        button { padding: 0 5px; border: 0; border-left: 1px solid #999; background: none; color: #555; font: inherit; }
        button.on { background: #eee; color: #217346; border-bottom: 1px solid #217346; }
        ui-icon { align-self: center; }
        .add { margin-left: 13px; }
        .hbar { display: flex; align-items: center; width: 39%; margin: 0 9px 0 auto; gap: 2px; }
        .thumb { flex: 1; height: 5px; margin-right: 12px; border: 1px solid #bbb; background: #e6e6e6; }
      </style>
      <div class="nav"><ui-icon name="left" size="5"></ui-icon><ui-icon name="right" size="5"></ui-icon></div>
      <button type="button">kaufman-28-15min</button>
      <button type="button">Sheet1</button>
      <button type="button" class="on">Sheet2</button>
      <ui-icon class="add" name="plus" size="7"></ui-icon>
      <div class="hbar"><ui-icon name="left" size="5"></ui-icon><div class="thumb"></div><ui-icon name="right" size="6"></ui-icon></div>
    `;
  }
}
customElements.define("sheet-tabs", SheetTabs);

class StatusBar extends HTMLElement {
  connectedCallback() {
    this.attachShadow({ mode: "open" }).innerHTML = `
      <style>
        :host { display: flex; align-items: center; height: 9px; padding: 0 3px; background: #dededc; }
        .left { display: flex; flex: 1; align-items: center; gap: 8px; }
        .left span { display: flex; gap: 1px; }
        .view { display: flex; justify-content: center; align-items: center; width: 16px; height: 9px; }
        .view.on { background: #bbb; }
        label { display: flex; align-items: center; gap: 3px; }
        label span { margin-left: 3px; }
        input { appearance: none; width: 40px; height: 1px; margin: 0; background: #999; }
        input::-webkit-slider-thumb { appearance: none; width: 2px; height: 5px; background: #444; }
      </style>
      <div class="left">就绪 <ui-icon name="macro" size="6"></ui-icon><span><ui-icon name="access" size="6"></ui-icon>辅助功能: 调查</span></div>
      <div class="view on"><ui-icon name="normal" size="6"></ui-icon></div>
      <div class="view"><ui-icon name="page" size="6"></ui-icon></div>
      <div class="view"><ui-icon name="breaks" size="6"></ui-icon></div>
      <label>− <input type="range" value="50" aria-label="缩放"> + <span>100%</span></label>
    `;
  }
}
customElements.define("status-bar", StatusBar);

class QuantMark extends HTMLElement {
  connectedCallback() {
    this.attachShadow({ mode: "open" }).innerHTML = `
      <style>
        :host { position: absolute; right: 4px; bottom: 0; width: 198px; height: 66px; pointer-events: none; white-space: nowrap; }
        .logo, .back, .front, .site, .squirrel { position: absolute; }
        .logo { left: 0; top: 1px; filter: drop-shadow(1px 1px 0 #777); }
        .front { left: 48px; top: 2px; color: #fff; font: 25px/34px "Noto Sans", "Noto Sans CJK SC", sans-serif; text-shadow: 1px 1px 1px #444; }
        .back { right: 0; top: 26px; color: #5f5f5f; font: bold 22px/26px "Noto Sans CJK SC", sans-serif; }
        .back span { color: #d65a65; }
        .site { left: 110px; top: 53px; color: #888; font: 8px/8px "DejaVu Sans Mono", monospace; }
        .squirrel { left: 120px; top: 12px; }
      </style>
      <svg class="squirrel" width="32" height="24" viewBox="0 0 32 24" fill="#d65a65">
        <path d="M2 12C0 5 5 0 9 3c5 2 4 7 6 10 1-2 2-4 5-4-1-3 0-5 2-7 0 2 2 2 4 3 4 3 2 7-2 7 2 5-1 8-6 10-7 2-12-1-12-5C7 14 7 9 2 12z"/>
        <path d="M4 9c4-3 7 1 8 6" fill="none" stroke="#e9e9e9" stroke-width="1.500"/>
      </svg>
      <div class="back">松鼠<span>Quant</span></div>
      <div class="site">quant789.com</div>
      <svg class="logo" width="41" height="36" viewBox="0 0 41 36" fill="#fff">
        <path d="M14 0C6 0 0 5 0 12c0 4 2 8 6 10l-2 5 6-3 6 1c-2-8 5-14 13-14C27 4 21 0 14 0z"/>
        <path d="M28 12c-7 0-13 4-13 10s6 11 13 11l5-1 5 3-1-5c2-2 4-5 4-8 0-6-6-10-13-10z" stroke="#777" stroke-width=".8"/>
        <g fill="#fff" stroke="#777"><circle cx="9" cy="8" r="1.500"/><circle cx="20" cy="8" r="1.500"/><circle cx="24" cy="19" r="1.200"/><circle cx="33" cy="19" r="1.200"/></g>
      </svg>
      <div class="front">松鼠Quant</div>
    `;
  }
}
customElements.define("quant-mark", QuantMark);

class ExcelApp extends HTMLElement {
  connectedCallback() {
    this.attachShadow({ mode: "open" }).innerHTML = `
      <style>
        :host { position: relative; display: flex; flex-direction: column; box-sizing: border-box; height: 100vh; border: solid #1d1f1e; border-width: 0 1px; overflow: hidden; }
        .cursor { position: absolute; left: 87%; top: 76%; width: 7px; height: 8px; margin-left: -2px; }
      </style>
      <title-bar></title-bar>
      <ribbon-tabs></ribbon-tabs>
      <ribbon-bar></ribbon-bar>
      <formula-bar></formula-bar>
      <sheet-grid></sheet-grid>
      <sheet-tabs></sheet-tabs>
      <status-bar></status-bar>
      <quant-mark></quant-mark>
      <svg class="cursor" viewBox="0 0 8 8"><path d="M3 1h2v2h2v2H5v2H3V5H1V3h2z" fill="#fff" stroke="#333"/></svg>
    `;
  }
}
customElements.define("excel-app", ExcelApp);
</script>
</body>
</html>
